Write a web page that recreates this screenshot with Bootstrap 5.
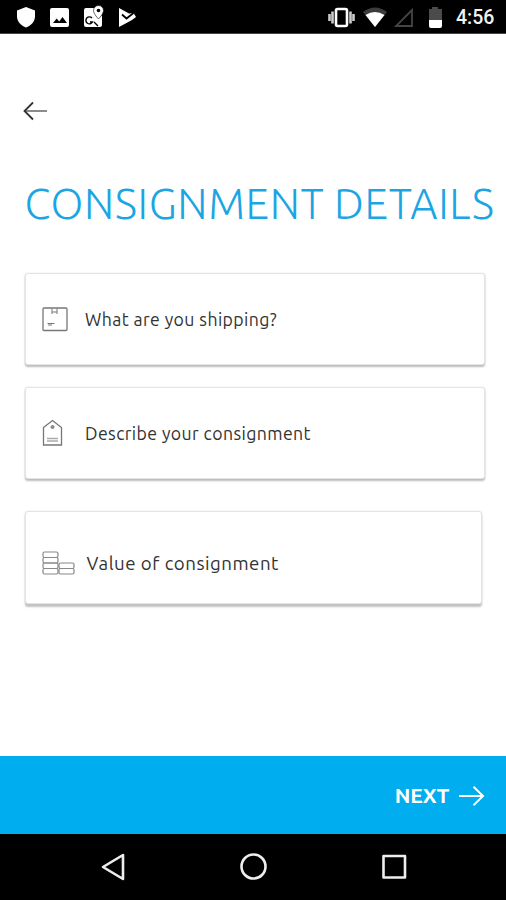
<!DOCTYPE html>
<html lang="en">
<head>
<meta charset="utf-8">
<meta name="viewport" content="width=device-width, initial-scale=1">
<title>Consignment details</title>
<link href="https://cdn.jsdelivr.net/npm/bootstrap@5.3.0/dist/css/bootstrap.min.css" rel="stylesheet">
<style>
body{font-family:Ubuntu,"Noto Sans","Open Sans",sans-serif;background:#fff;color:#333}
.screen{width:506px;height:900px}
.screen svg{display:block;flex:none}
.status-bar{height:34px;background:#000;border-bottom:1px solid #444}
.clock{font:500 19.5px/36px Roboto,sans-serif;color:#f2f2f2;width:39px;white-space:nowrap}
.back-btn{margin:66px 0 0 22px;width:26px;height:22px}
.page-title{font-family:Ubuntu,"Open Sans","Noto Sans",sans-serif;font-weight:300;font-size:42.5px;line-height:56px;letter-spacing:.7px;word-spacing:-1px;color:#1ba5e3;margin:53px 0 0 24.5px;white-space:nowrap}
.options{margin:42px 21px 0 25px}
.option{height:92px;border:1px solid #e4e4e4;border-radius:3px;box-shadow:0 2px 2px #bbb,0 0 2px #e4e4e4;background:#fff;padding-left:16px;font-size:17.7px;letter-spacing:.4px;color:#333;margin-bottom:22px}
.option .pic{width:43px}
.option .caption-text{padding-top:2px}
.option.value{margin:10px 3px 0 0;height:93px;padding-top:12px;font-size:18.7px;letter-spacing:.5px;box-shadow:0 3px 2px #c2c2c2,0 0 2px #e4e4e4}
.option.value .pic{width:44.5px}
.next-bar{height:78px;background:#00adee;color:#fff;font-weight:700;font-size:21px;letter-spacing:-.3px;padding-right:21px}
.next-label{padding-top:1px}
.nav-keys{height:66px;background:#000}
</style>
<script src="https://cdn.jsdelivr.net/npm/bootstrap@5.3.0/dist/js/bootstrap.bundle.min.js"></script>
</head>
<body>
<div class="screen d-flex flex-column overflow-hidden">
  <header class="status-bar d-flex flex-shrink-0">
    <svg width="456" height="33" viewBox="0 0 456 33">
      <path d="M26 7l9 3.500v6c0 5-4 9-9 11c-5-2-9-6-9-11v-6z" fill="#fff"/>
      <rect x="50" y="8" width="19" height="19" rx="2" fill="#fff"/>
      <path d="M53 23l3.700-4.500 2.500 3 3.300-4.500 4.500 6z" fill="#000"/>
      <path d="M86 8h9c0 5 3 8 4 10l3-3v10q0 2-2 2H86q-2 0-2-2V10q0-2 2-2z" fill="#fff"/>
      <path d="M92 18a3.500 3.500 0 1 0 .5 4H90M98 26l-4-4" fill="none" stroke="#000" stroke-width="1.400"/>
      <path d="M98.500 5.500a5 5 0 0 1 5 5c0 3.500-5 8.500-5 8.500s-5-5-5-8.500a5 5 0 0 1 5-5z" fill="#fff" stroke="#000" stroke-width=".6"/>
      <circle cx="98.500" cy="10.500" r="1.800" fill="#000"/>
      <path d="M119 8l10 5.500 4.500-.5 2.500 4-4 3-13 7z" fill="#fff"/>
      <path d="M122 14.500l4.500 4 7-5.500" fill="none" stroke="#000" stroke-width="1.800"/>
      <path d="M329.500 14v7M332.500 11.500v12M350.500 11.500v12M353.500 14v7" stroke="#ccc" stroke-width="2.600"/>
      <rect x="336" y="9" width="11" height="17" rx="1.500" fill="#000" stroke="#fff" stroke-width="2.600"/>
      <path d="M363 12q12-9 24 0L375 27z" fill="#3c3c3c"/>
      <path d="M365.500 15q9.500-6 19 0L375 27z" fill="#fff"/>
      <path d="M412 10v16h-16z" fill="none" stroke="#454545" stroke-width="1.800"/>
      <path d="M429 9h3V7h6v2h4v11h-13z" fill="#4b4b4b"/><path d="M429 20h13v6q0 2-2 2h-9q-2 0-2-2z" fill="#fff"/>
    </svg>
    <span class="clock">4:56</span>
  </header>
  <main class="flex-grow-1">
    <button class="back-btn btn p-0 border-0 d-block" aria-label="Back"><svg width="26" height="22" viewBox="0 0 26 22"><path d="M3 11h22" stroke="#777" stroke-width="1.700"/><path d="M11 2.500L2.500 11 11 19.500" fill="none" stroke="#333" stroke-width="1.800"/></svg></button>
    <h1 class="page-title"><span>CONSIGNMENT DETAILS</span></h1>
    <div class="options d-flex flex-column">
      <div class="option d-flex align-items-center">
        <span class="pic"><svg width="26" height="25" viewBox="0 0 26 25"><rect x="1" y="1" width="24" height="22.500" rx="1" fill="none" stroke="#777" stroke-width="1.300"/><path d="M10 1.500v5.500M15 1.500v5.500M10 5h5M5.500 16.500h7M6 18h4" fill="none" stroke="#777"/></svg></span>
        <span class="caption-text">What are you shipping?</span>
      </div>
      <div class="option d-flex align-items-center">
        <span class="pic"><svg width="22" height="28" viewBox="0 0 22 28"><path d="M1.500 8.500L10.500 1.500l9 7v17.500h-18z" fill="none" stroke="#777" stroke-width="1.300"/><circle cx="10.500" cy="8" r="1.500" fill="#999" stroke="#777"/><path d="M5 19.500h11M5 22h11" stroke="#aaa" stroke-width="1.500"/></svg></span>
        <span class="caption-text">Describe your consignment</span>
      </div>
      <div class="option value d-flex align-items-center">
        <span class="pic"><svg width="33" height="25" viewBox="0 0 33 25"><g fill="none" stroke="#888" stroke-width="1.200"><rect x="1" y="1" width="15" height="5.500" rx="1.500"/><rect x="1" y="6.500" width="15" height="5.500" rx="1.500"/><rect x="1" y="12" width="15" height="5.500" rx="1.500"/><rect x="1" y="17.500" width="15" height="5.500" rx="1.500"/><rect x="17" y="12" width="15" height="5.500" rx="1.500"/><rect x="17" y="17.500" width="15" height="5.500" rx="1.500"/></g></svg></span>
        <span class="caption-text">Value of consignment</span>
      </div>
    </div>
  </main>
  <div class="next-bar d-flex align-items-center justify-content-end flex-shrink-0">
    <span class="next-label">NEXT</span>
    <svg class="ms-2 mt-1" width="28" height="22" viewBox="0 0 28 22"><path d="M2 10h24M16.500 .8L26 10l-9.500 9.200" fill="none" stroke="#fff" stroke-width="2"/></svg>
  </div>
  <nav class="nav-keys flex-shrink-0">
    <svg width="506" height="66" viewBox="0 0 506 66"><g fill="none" stroke="#eee" stroke-width="2.600" stroke-linejoin="round"><path d="M123 21v24L103 33z"/><circle cx="253.500" cy="32.500" r="12"/><rect x="383.500" y="22" width="21.500" height="21.500"/></g></svg>
  </nav>
</div>
</body>
</html>
